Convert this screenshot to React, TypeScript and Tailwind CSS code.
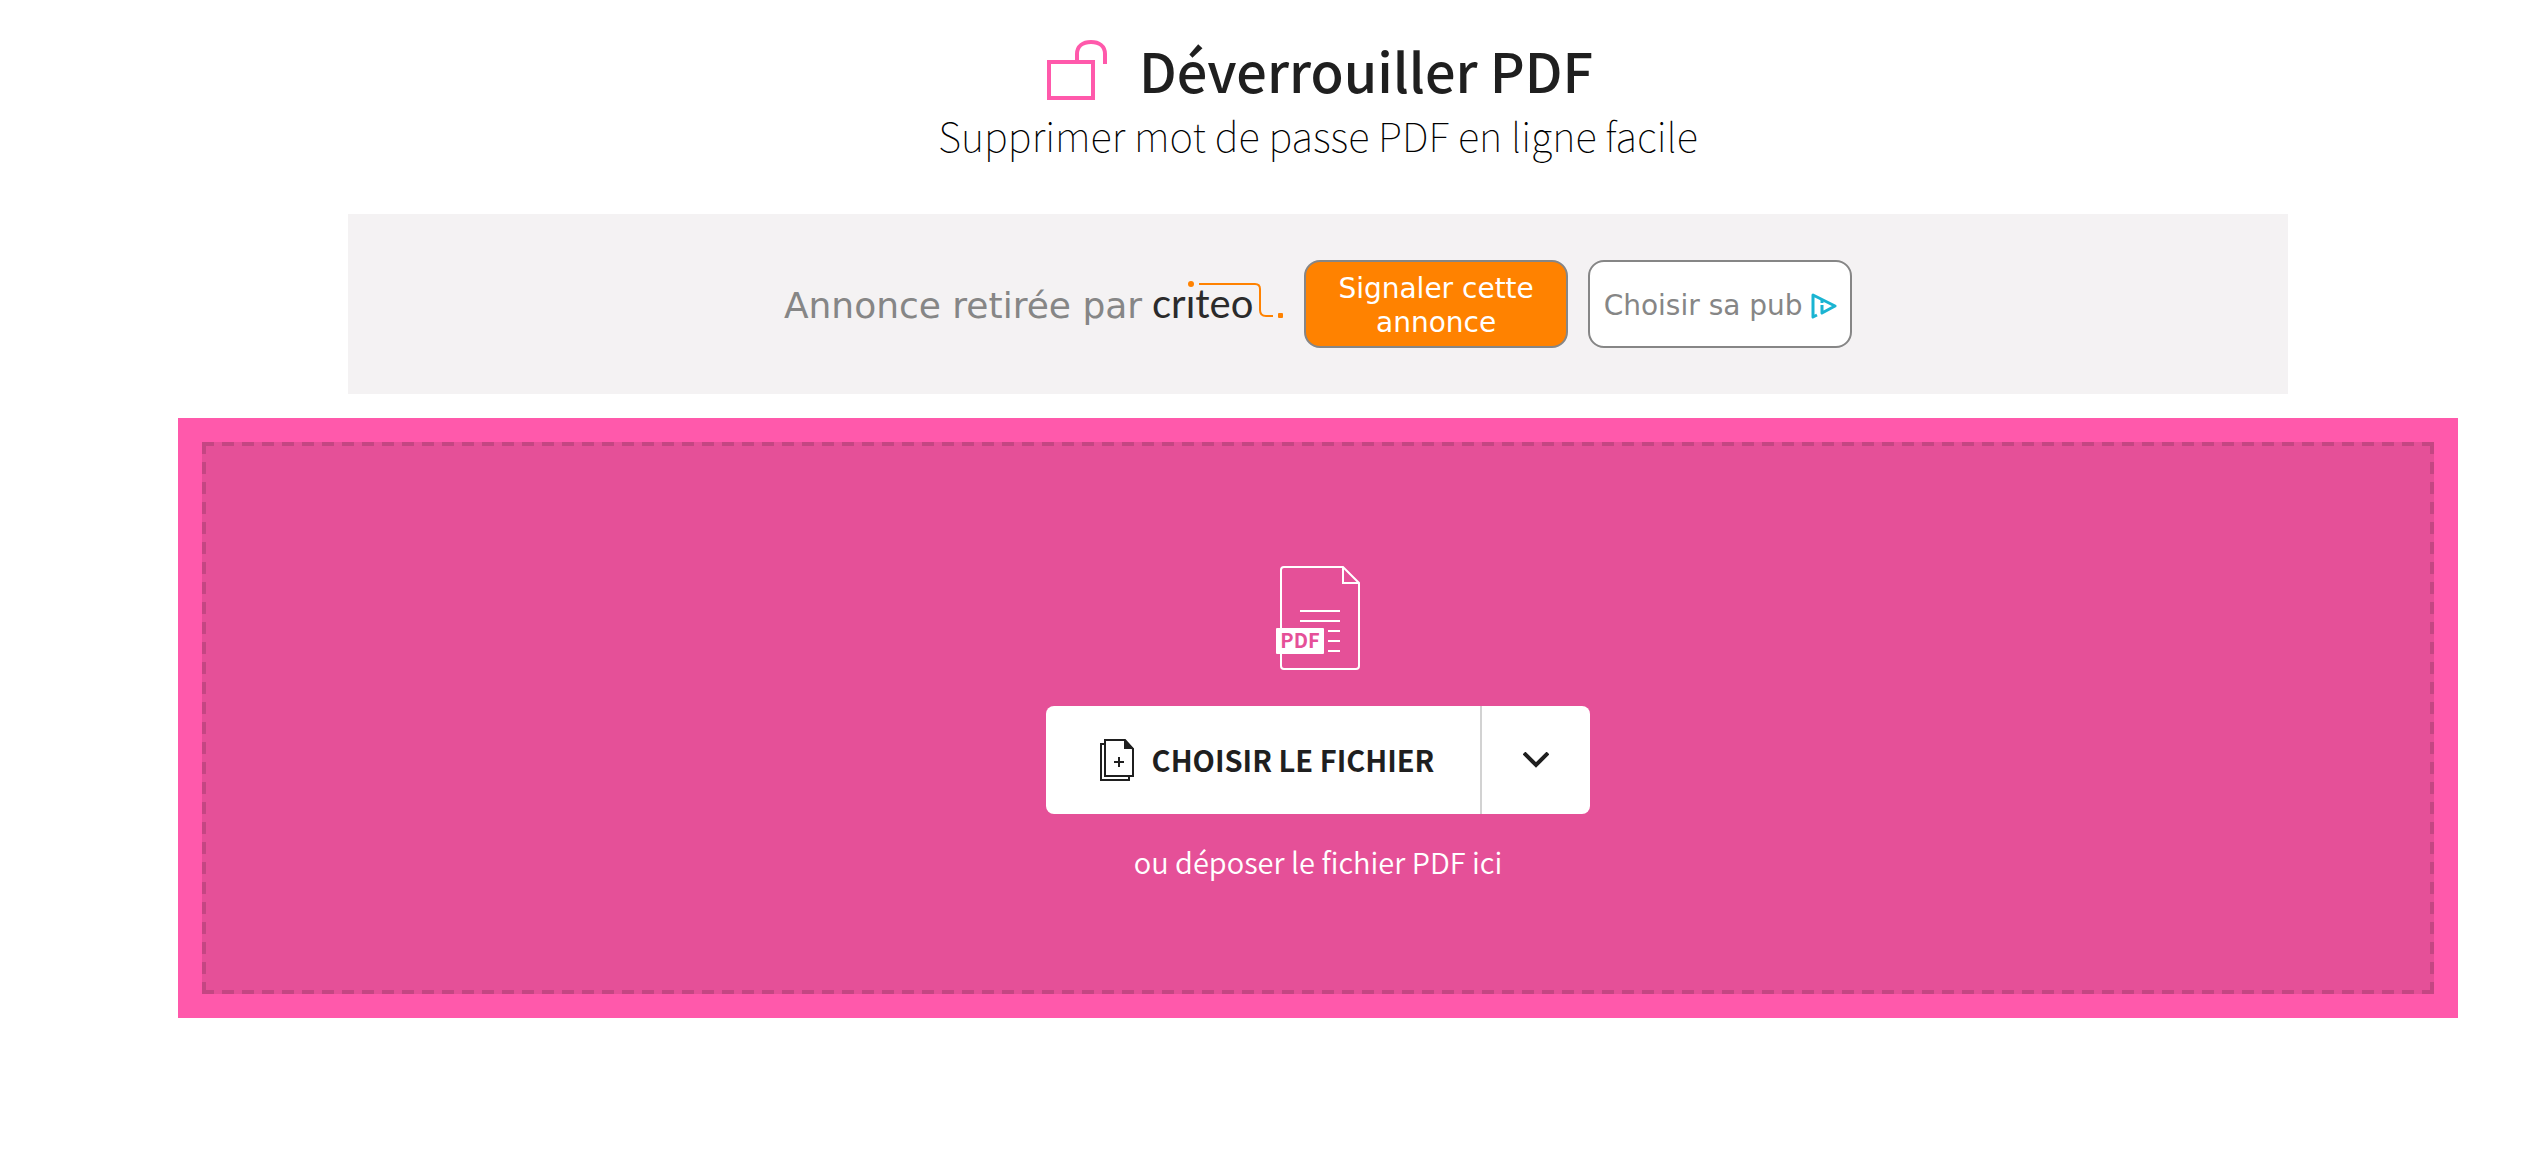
import React from 'react';

const UnlockIcon: React.FC = () => (
  <svg className="h-[60px] w-[60px]" viewBox="0 0 60 60" fill="none" stroke="#ff59ab" strokeWidth="4" aria-hidden="true">
    <path d="M2 22H46V58H2Z" />
    <path d="M30 20V14C30 6 36 2 44 2S58 6 58 14V24" />
  </svg>
);

const PdfIcon: React.FC = () => (
  <svg className="h-[104px] w-[84px]" viewBox="0 0 84 104" fill="none" stroke="#fff" strokeWidth="2" aria-hidden="true">
    <path d="M67 1H8Q5 1 5 4V100Q5 103 8 103H80Q83 103 83 100V17ZM67 1V17H83" />
    <path d="M24 45H64M24 55H64M52 65H64M52 75H64M52 85H64" />
    <rect x="0" y="62" width="48" height="26" rx="1" fill="#fff" stroke="none" />
    <text x="24" y="82" textAnchor="middle" fill="#e55098" stroke="none" className="font-['Noto_Sans_CJK_SC',sans-serif] text-[20px] font-bold">
      PDF
    </text>
  </svg>
);

const AddFileIcon: React.FC = () => (
  <svg className="h-[42px] w-[34px]" viewBox="0 0 34 42" fill="none" stroke="#1f1f1f" strokeWidth="2" aria-hidden="true">
    <path d="M5 5H1V41H29V37" />
    <path d="M25 1H5V37H33V10Z" />
    <path d="M24 0L34 10H24Z" fill="#1f1f1f" stroke="none" />
    <path d="M14 23H24M19 18V28" />
  </svg>
);

const CriteoLogo: React.FC = () => (
  <svg className="h-[60px] w-[136px]" viewBox="0 0 136 60" fill="none" aria-label="criteo">
    <text x="2" y="46" fill="#2b2b2b" className="font-[Lato,sans-serif] text-[40px]">
      crıteo
    </text>
    <circle cx="41" cy="12" r="3" fill="#ff8200" />
    <path d="M49 12H105Q110 12 110 17V38Q110 44 116 44H123" stroke="#ff8200" strokeWidth="2" />
    <rect x="128" y="41" width="5" height="5" rx="1" fill="#ff8200" />
  </svg>
);

const AdChoicesIcon: React.FC = () => (
  <svg className="h-[26px] w-[26px] shrink-0" viewBox="0 0 26 26" fill="none" stroke="#1ab4d2" aria-hidden="true">
    <path d="M6 22L2 24V2L24 13L11 20V12" strokeWidth="3" strokeLinejoin="round" />
    <path d="M11 7V10" strokeWidth="3" />
  </svg>
);

const AdBanner: React.FC = () => (
  <aside className="mx-[170px] mt-10 flex h-[180px] items-center justify-center bg-[#f4f2f3] font-['DejaVu_Sans',sans-serif]">
    <p className="pt-1 text-4xl whitespace-nowrap text-[#868686]">Annonce retirée par</p>
    <div className="ml-2 pb-1">
      <CriteoLogo />
    </div>
    <button className="ml-[18px] h-[88px] w-[264px] rounded-2xl border-2 border-[#868686] bg-[#ff8200] px-6 pt-1 text-[28px] leading-[34px] text-white">
      Signaler cette annonce
    </button>
    <button className="ml-5 flex h-[88px] w-[264px] items-center justify-center gap-2 rounded-2xl border-2 border-[#868686] bg-white pt-1 text-[28px] whitespace-nowrap text-[#868686]">
      Choisir sa pub
      <AdChoicesIcon />
    </button>
  </aside>
);

const DropZone: React.FC = () => (
  <section className="mt-6 bg-[#ff59ab] p-6">
    {/* dashed frame: 12px dashes with 8px gaps on the four sides */}
    <div className="flex h-[552px] flex-col items-center pt-[124px] [background:repeating-linear-gradient(90deg,#c44683_0_12px,transparent_12px_20px)_top/100%_4px_no-repeat,repeating-linear-gradient(90deg,#c44683_0_12px,transparent_12px_20px)_bottom/100%_4px_no-repeat,repeating-linear-gradient(#c44683_0_12px,transparent_12px_20px)_left/4px_100%_no-repeat,repeating-linear-gradient(#c44683_0_12px,transparent_12px_20px)_right/4px_100%_no-repeat,#e55098]">
      <PdfIcon />
      <div className="mt-9 flex h-[108px] overflow-hidden rounded-lg bg-white">
        <button className="flex w-[434px] items-center justify-center gap-[18px] pl-2 text-[29px] font-bold whitespace-nowrap">
          <AddFileIcon />
          CHOISIR LE FICHIER
        </button>
        <button className="flex w-[110px] items-center justify-center border-l-2 border-[#d2d2d2]" aria-label="Autres sources">
          <svg className="h-4 w-[26px]" viewBox="0 0 26 16" fill="none" stroke="#1f1f1f" strokeWidth="4" aria-hidden="true">
            <path d="M1 1L13 13L25 1" />
          </svg>
        </button>
      </div>
      <p className="mt-6 text-[29px] leading-[46px] font-[350] text-white">ou déposer le fichier PDF ici</p>
    </div>
  </section>
);

export default function App() {
  return (
    <main className="min-h-screen bg-white pt-8 pr-[90px] pl-[178px] font-['Noto_Sans_CJK_SC',sans-serif] text-[#1f1f1f]">
      <header className="flex flex-col items-center">
        <div className="flex h-[76px] items-center gap-8 pl-1">
          <UnlockIcon />
          <h1 className="text-[54px] leading-[72px] font-medium">Déverrouiller PDF</h1>
        </div>
        <p className="pb-3 text-[40px] leading-[54px] font-thin text-black">Supprimer mot de passe PDF en ligne facile</p>
      </header>
      <AdBanner />
      <DropZone />
    </main>
  );
}
